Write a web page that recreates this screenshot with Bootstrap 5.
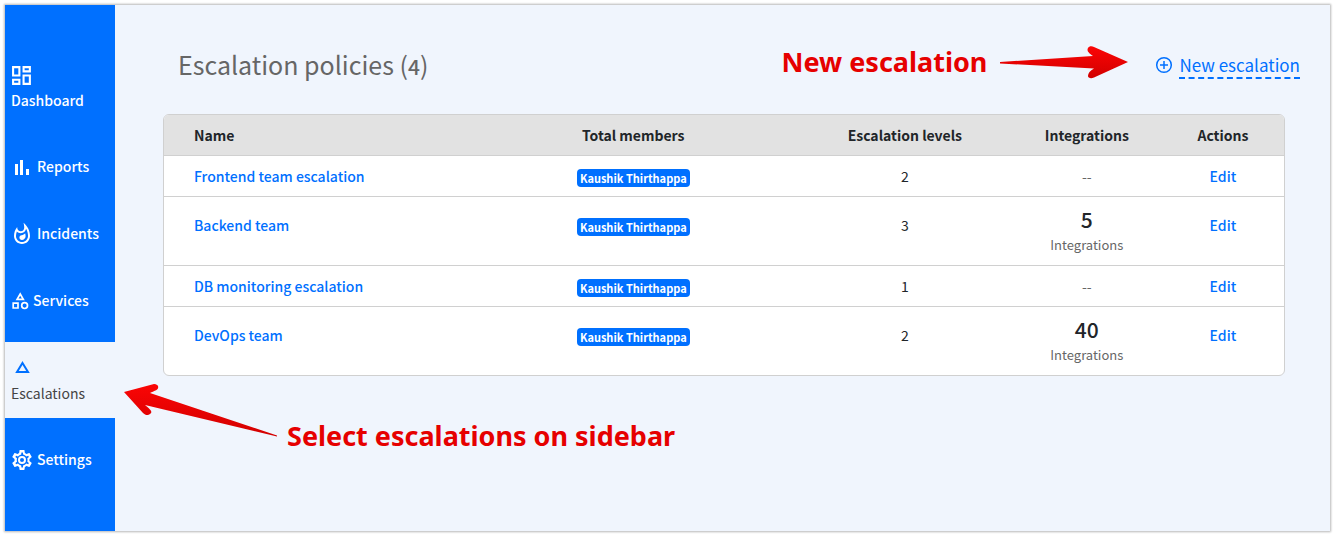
<!DOCTYPE html>
<html lang="en">
<head>
<meta charset="utf-8">
<meta name="viewport" content="width=device-width, initial-scale=1">
<title>Escalation policies</title>
<link href="https://cdn.jsdelivr.net/npm/bootstrap@5.3.0/dist/css/bootstrap.min.css" rel="stylesheet">
<style>
  :root { --brand: #0070ff; --page: #f0f5fd; --line: #d0d0d0; --note: #e60000; }
  body { font-family: "Noto Sans CJK SC", "Noto Sans", sans-serif; font-size: 14px; line-height: 24px; background: #fff; padding: 5px; }
  a { color: var(--brand); text-decoration: none; font-weight: 500; }
  .app-frame { min-height: calc(100vh - 10px); background: var(--page); box-shadow: 0 0 2px 1px #b8b8b8; }
  .side-menu { width: 110px; background: var(--brand); padding-top: 44px; }
  .side-menu a { color: #fff; height: 67px; padding: 0 6px 2px; }
  .side-menu a.stacked { height: 76px; margin: 0 0 8px; padding: 15px 6px 0; gap: 2px; }
  .side-menu a.active { background: var(--page); color: #444; margin-top: 8px; font-weight: 400; }
  .side-menu svg { width: 22px; height: 22px; flex: none; overflow: visible; }
  .side-menu a.active svg { color: var(--brand); }
  .page-head { padding: 39px 30px 0 63px; height: 109px; }
  .page-head h1 { font-size: 25px; line-height: 40px; font-weight: 400; color: #666; }
  .digits { font-size: 21px; font-weight: 500; }
  .note { font-family: "Noto Sans", sans-serif; font-weight: 700; font-size: 27px; line-height: 36px; color: var(--note); }
  .note-side { margin-top: 34px; }
  .new-link { font-size: 17px; line-height: 24px; font-weight: 400; margin-top: 9px; }
  .new-link .dashed { border-bottom: 2px dashed var(--brand); }
  .policy-card { margin: 0 45px 0 48px; border: 1px solid var(--line); border-radius: 6px; overflow: hidden; background: #fff; }
  .policy-table { table-layout: fixed; width: 100%; text-align: center; }
  .policy-table th { background: #e2e2e2; font-weight: 700; padding: 8px 0; color: #212529; }
  .policy-table td { padding: 8px 0; vertical-align: top; border-top: 1px solid var(--line); }
  .policy-table .tall td { padding-top: 16px; }
  .policy-table .tall td.count-cell { padding-top: 8px; }
  .policy-table th:first-child, .policy-table td:first-child { text-align: left; padding-left: 30px; }
  .policy-table td.count-cell { color: #666; }
  .count-cell .digits { display: block; line-height: 28px; color: #212529; }
  .count-cell small { display: block; font-size: 13px; line-height: 24px; }
  .c-name { width: 27.2%; } .c-members { width: 29.4%; } .c-levels { width: 19.1%; }
  .c-integrations { width: 13.4%; } .c-actions { width: 10.9%; }
  .member { display: inline-block; background: var(--brand); color: #fff; font-size: 11px; line-height: 18px; font-weight: 700; padding: 0 3px; border-radius: 4px; vertical-align: middle; }
</style>
</head>
<body>
<div class="app-frame d-flex">
  <nav class="side-menu d-flex flex-column flex-shrink-0" aria-label="Main">
    <a href="#" class="stacked d-flex flex-column">
      <svg viewBox="2 1 21 21" fill="currentColor"><path d="M19 5v2h-4V5h4M9 5v6H5V5h4m10 8v6h-4v-6h4M9 17v2H5v-2h4M21 3h-8v6h8V3zM11 3H3v10h8V3zm10 8h-8v10h8V11zm-10 4H3v6h8v-6z"/></svg>
      <span>Dashboard</span>
    </a>
    <a href="#" class="d-flex align-items-center gap-1">
      <svg viewBox="0 0 22 22" fill="currentColor"><path d="M4 9h3v11H4zM9 5h3v15H9zM15 14h3v6h-3z"/></svg>
      <span>Reports</span>
    </a>
    <a href="#" class="d-flex align-items-center gap-1">
      <svg viewBox="1 0 22 22" fill="currentColor"><path d="M11.570 13.160c-1.360.28-2.170 1.160-2.170 2.410 0 1.340 1.110 2.420 2.490 2.420 2.050 0 3.710-1.660 3.710-3.710 0-1.070-.15-2.120-.46-3.120-.79 1.070-2.200 1.720-3.570 2zM13.500.67s.74 2.650.74 4.800c0 2.060-1.350 3.730-3.410 3.730-2.070 0-3.630-1.670-3.630-3.730l.03-.36C5.210 7.510 4 10.620 4 14c0 4.420 3.580 8 8 8s8-3.580 8-8C20 8.610 17.410 3.800 13.500.67zM12 20c-3.310 0-6-2.690-6-6 0-1.530.3-3.040.86-4.430 1.010 1.010 2.410 1.630 3.970 1.630 2.660 0 4.750-1.830 5.280-4.430C17.340 8.970 18 11.440 18 14c0 3.310-2.690 6-6 6z"/></svg>
      <span>Incidents</span>
    </a>
    <a href="#" class="d-flex align-items-center">
      <svg viewBox="0 0 22 22" fill="none" stroke="currentColor" stroke-width="1.700"><path d="M9.200 5 12.300 10.300H6.100zM2.200 14.200h4.800v4.800H2.200z"/><circle cx="13.600" cy="16.600" r="2.900"/></svg>
      <span>Services</span>
    </a>
    <a href="#" class="stacked active d-flex flex-column" aria-current="page">
      <svg viewBox="0 0 22 22" fill="none" stroke="currentColor" stroke-width="2"><path d="M11.500 6 17 15H6z"/></svg>
      <span>Escalations</span>
    </a>
    <a href="#" class="d-flex align-items-center gap-1">
      <svg viewBox="1 0 22 22" fill="currentColor"><path d="M19.430 12.980c.04-.32.07-.64.07-.98s-.03-.66-.07-.98l2.110-1.650c.19-.15.24-.42.12-.64l-2-3.460c-.12-.22-.39-.3-.61-.22l-2.490 1c-.52-.4-1.080-.73-1.690-.98l-.38-2.650C14.460 2.180 14.250 2 14 2h-4c-.25 0-.46.18-.49.42l-.38 2.650c-.61.25-1.170.59-1.690.98l-2.490-1c-.23-.09-.49 0-.61.22l-2 3.460c-.13.22-.07.49.12.64l2.110 1.650c-.04.32-.07.65-.07.98s.03.66.07.98l-2.110 1.650c-.19.15-.24.42-.12.64l2 3.460c.12.22.39.3.61.22l2.490-1c.52.4 1.080.73 1.690.98l.38 2.650c.03.24.24.42.49.42h4c.25 0 .46-.18.49-.42l.38-2.650c.61-.25 1.170-.59 1.690-.98l2.490 1c.23.09.49 0 .61-.22l2-3.460c.12-.22.07-.49-.12-.64zM17.450 11.270c.07.5.07.96 0 1.460l-.14 1.130 1.590 1.240-.7 1.210-1.870-.75-.89.700c-.43.320-.840.560-1.250.730l-1.060.430-.28 1.980h-1.400l-.28-1.980-1.060-.43c-.43-.18-.83-.41-1.230-.71l-.91-.72-1.870.75-.7-1.210 1.590-1.240-.14-1.130c-.07-.5-.07-.96 0-1.460l.14-1.130L5.400 8.900l.7-1.210 1.870.75.89-.700c.43-.320.840-.560 1.250-.730l1.060-.430.28-1.980h1.400l.28 1.980 1.060.43c.43.18.83.41 1.230.71l.91.72 1.870-.75.7 1.210-1.590 1.240zM12 8a4 4 0 1 0 0 8 4 4 0 0 0 0-8zm0 6a2 2 0 1 1 0-4 2 2 0 0 1 0 4z" fill-rule="evenodd"/></svg>
      <span>Settings</span>
    </a>
  </nav>

  <main class="flex-grow-1">
    <header class="page-head d-flex align-items-start">
      <h1 class="mb-0">Escalation policies (<span class="digits">4</span>)</h1>
      <span class="note ms-auto">New escalation</span>
      <svg class="flex-shrink-0 ms-2 me-4" width="136" height="36" viewBox="-5 0 136 36" aria-hidden="true">
        <defs><linearGradient id="red" x1="0" y1="0" x2="0" y2="1"><stop offset="0" stop-color="#fb0505"/><stop offset="1" stop-color="#d20000"/></linearGradient></defs>
        <path fill="url(#red)" d="M0 18 93 12C87 8 87 6 88 4 89 2 92 2 94 3L128 18 94 33.500C91 35 88 34 88 32 88 29 90 27 94 24.500L0 19.500z"/>
      </svg>
      <a href="#" class="new-link d-flex align-items-start gap-1">
        <svg width="20" height="24" viewBox="0 0 20 24" fill="none" stroke="currentColor" stroke-width="1.500" aria-hidden="true"><circle cx="9" cy="12" r="7.300"/><path d="M9 8v8M5 12h8"/></svg>
        <span class="dashed">New escalation</span>
      </a>
    </header>

    <section class="policy-card">
      <table class="policy-table">
        <colgroup><col class="c-name"><col class="c-members"><col class="c-levels"><col class="c-integrations"><col class="c-actions"></colgroup>
        <thead>
          <tr><th>Name</th><th>Total members</th><th>Escalation levels</th><th>Integrations</th><th>Actions</th></tr>
        </thead>
        <tbody>
          <tr><td><a href="#">Frontend team escalation</a></td><td><span class="member">Kaushik Thirthappa</span></td><td>2</td><td class="count-cell">--</td><td><a href="#">Edit</a></td></tr>
          <tr class="tall"><td><a href="#">Backend team</a></td><td><span class="member">Kaushik Thirthappa</span></td><td>3</td><td class="count-cell"><span class="digits">5</span><small>Integrations</small></td><td><a href="#">Edit</a></td></tr>
          <tr><td><a href="#">DB monitoring escalation</a></td><td><span class="member">Kaushik Thirthappa</span></td><td>1</td><td class="count-cell">--</td><td><a href="#">Edit</a></td></tr>
          <tr class="tall"><td><a href="#">DevOps team</a></td><td><span class="member">Kaushik Thirthappa</span></td><td>2</td><td class="count-cell"><span class="digits">40</span><small>Integrations</small></td><td><a href="#">Edit</a></td></tr>
        </tbody>
      </table>
    </section>

    <div class="d-flex align-items-start ps-2 pt-2">
      <svg class="flex-shrink-0" width="156" height="60" viewBox="0 0 156 60" aria-hidden="true">
        <path fill="url(#red)" d="M1 8 31 0C34 0 36 2 35 4 35 6 31 7 27 9L154 51.500V52.500L22 21C28 26 30 28 27 30 25 32 22 31 20 29z"/>
      </svg>
      <span class="note note-side ms-2">Select escalations on sidebar</span>
    </div>
  </main>
</div>
<script src="https://cdn.jsdelivr.net/npm/bootstrap@5.3.0/dist/js/bootstrap.bundle.min.js"></script>
</body>
</html>
